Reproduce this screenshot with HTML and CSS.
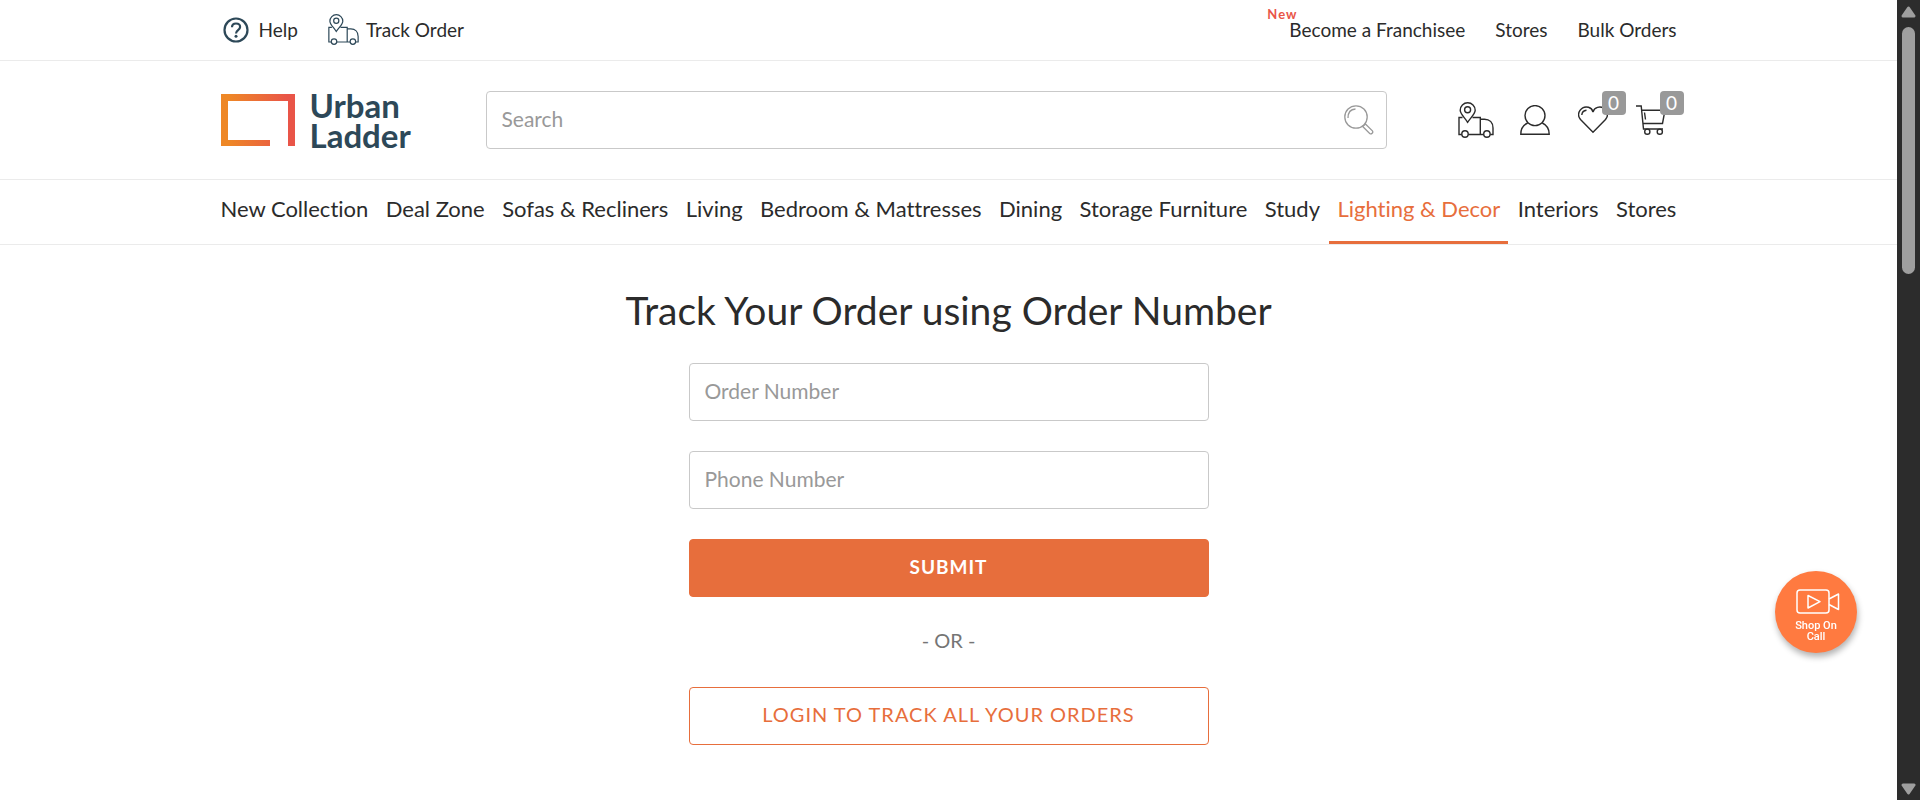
FILE: index.html
```html
<!DOCTYPE html>
<html lang="en">
<head>
<meta charset="utf-8">
<meta name="viewport" content="width=device-width, initial-scale=1">
<title>Track Your Order - Urban Ladder</title>
<link rel="stylesheet" href="styles.css">
</head>
<body>
<svg class="symbols" aria-hidden="true">
  <symbol id="truck" viewBox="0 0 36 36">
    <g fill="none" stroke="currentColor" stroke-width="1.4">
      <path d="M4.5 15.5H1v17h2.8M10.2 32.500H25.600M32.200 32.500H35V26c0-5.500-3.500-8.800-8.500-8.800H22.300M14.500 15.500H22.300V32.500"/>
      <path d="M9.600 20.300C7 16 2.200 12 2.200 8.300a7.500 7.500 0 0 1 15 0C17.200 12 12.400 16 9.600 20.300z"/>
      <circle cx="9.600" cy="7.800" r="3"/>
      <circle cx="7" cy="32" r="3.200"/>
      <circle cx="28.900" cy="32" r="3.200"/>
    </g>
  </symbol>
</svg>
<div class="frame">
  <div class="page">
    <div class="topbar">
      <div class="container topbar-row">
        <nav class="top-links" aria-label="Support">
          <a class="top-link" href="#help">
            <svg class="icon-help" viewBox="0 0 26 26" aria-hidden="true">
              <circle cx="13" cy="13" r="11.500" fill="none" stroke="currentColor" stroke-width="2.200"/>
              <path d="M9 10.200C9 7.800 10.600 6.500 13 6.500s4.100 1.400 4.100 3.500c0 3-4.100 3.200-4.100 6.400" fill="none" stroke="currentColor" stroke-width="2.200"/>
              <circle cx="13" cy="19.300" r="1.500" fill="currentColor"/>
            </svg>Help</a>
          <a class="top-link" href="#track"><svg class="icon-track" aria-hidden="true"><use href="#truck"/></svg>Track Order</a>
        </nav>
        <nav class="top-links" aria-label="Company">
          <a class="top-link franchise" href="#franchise"><span class="new-tag">New</span>Become a Franchisee</a>
          <a class="top-link" href="#stores">Stores</a>
          <a class="top-link" href="#bulk">Bulk Orders</a>
        </nav>
      </div>
    </div>

    <header class="header">
      <div class="container header-row">
        <a class="logo" href="#home">
          <svg class="logo-mark" viewBox="0 0 74 52" aria-hidden="true">
            <defs><linearGradient id="brand" x1="0" y1="0" x2="1" y2="0"><stop offset="0.100" stop-color="#ee8726"/><stop offset="0.900" stop-color="#e95548"/></linearGradient></defs>
            <path d="M0 0H74V52H67V7H7V46H49V52H0z" fill="url(#brand)"/>
          </svg>
          <span class="logo-name">Urban<br>Ladder</span>
        </a>
        <form class="search" role="search">
          <input class="field search-field" type="search" placeholder="Search" aria-label="Search">
          <button class="search-button" type="button" aria-label="Search">
            <svg viewBox="0 0 30 30" aria-hidden="true">
              <g fill="none" stroke="currentColor" stroke-width="1.300">
                <circle cx="12" cy="12" r="11.200"/>
                <path d="M4 13c0-5.500 3-8.800 7.500-9M18.700 21.500l7 7c1.700 1.200 3.900-1 2.700-2.700l-7-6.800z"/>
              </g>
            </svg>
          </button>
        </form>
        <nav class="actions" aria-label="Account">
          <a class="action" href="#track" aria-label="Track order"><svg class="icon-truck" aria-hidden="true"><use href="#truck"/></svg></a>
          <a class="action" href="#account" aria-label="Account">
            <svg class="icon" viewBox="0 0 30 30" aria-hidden="true"><g fill="none" stroke="currentColor" stroke-width="1.400"><circle cx="15" cy="10.600" r="10"/><path d="M7.700 18C3.500 20 .8 24 .8 29.200H29.200C29.200 24 26.500 20 22.300 18"/></g></svg>
          </a>
          <a class="action" href="#wishlist" aria-label="Wishlist, 0 items">
            <svg class="icon" viewBox="0 0 30 30" aria-hidden="true"><g fill="none" stroke="currentColor" stroke-width="1.400"><path d="M15 27.200L2.500 14.500C-2.500 8.500 3.500.5 10.500 2.300 13 3 14.500 5 15 7 15.500 5 17 3 19.500 2.300 26.500.5 32.500 8.500 27.500 14.500z"/><path d="M3.800 10c.2-3 1.700-4.500 4.700-4.800"/></g></svg>
            <span class="badge">0</span>
          </a>
          <a class="action" href="#cart" aria-label="Cart, 0 items">
            <svg class="icon" viewBox="0 0 30 30" aria-hidden="true"><g fill="none" stroke="currentColor" stroke-width="1.400"><path d="M0 1H5.200L7.500 24H27M5.800 5.200H29L26.500 18.500H7M8.500 7.500L9.500 14.500"/><circle cx="11.300" cy="26.700" r="2.600"/><circle cx="23.800" cy="26.700" r="2.600"/></g></svg>
            <span class="badge">0</span>
          </a>
        </nav>
      </div>
    </header>

    <nav class="categories" aria-label="Categories">
      <div class="container">
        <ul class="category-list">
          <li><a class="category" href="#new">New Collection</a></li>
          <li><a class="category" href="#deals">Deal Zone</a></li>
          <li><a class="category" href="#sofas">Sofas &amp; Recliners</a></li>
          <li><a class="category" href="#living">Living</a></li>
          <li><a class="category" href="#bedroom">Bedroom &amp; Mattresses</a></li>
          <li><a class="category" href="#dining">Dining</a></li>
          <li><a class="category" href="#storage">Storage Furniture</a></li>
          <li><a class="category" href="#study">Study</a></li>
          <li><a class="category active" href="#lighting">Lighting &amp; Decor</a></li>
          <li><a class="category" href="#interiors">Interiors</a></li>
          <li><a class="category" href="#stores">Stores</a></li>
        </ul>
      </div>
    </nav>

    <main class="main">
      <h1 class="title">Track Your Order using Order Number</h1>
      <form class="track-form">
        <input class="field" type="text" placeholder="Order Number" aria-label="Order Number">
        <input class="field" type="tel" placeholder="Phone Number" aria-label="Phone Number">
        <button class="button primary" type="button">SUBMIT</button>
        <p class="or">- OR -</p>
        <button class="button outline" type="button">LOGIN TO TRACK ALL YOUR ORDERS</button>
      </form>
    </main>
    <button class="call" type="button">
      <svg class="call-icon" viewBox="0 0 44 25" aria-hidden="true"><g fill="none" stroke="currentColor" stroke-width="1.500" stroke-linejoin="round"><rect x="1" y="1" width="32" height="23" rx="3"/><path d="M12 6.500V19L24 12.700zM33 10l9.500-5V20.500L33 15.500"/></g></svg>
      Shop On<br>Call
    </button>
  </div>
  <div class="scrollbar" aria-hidden="true">
    <svg class="arrow" viewBox="0 0 15 12"><path d="M7.500 2L13 10H2z" fill="currentColor" stroke="currentColor" stroke-width="3" stroke-linejoin="round"/></svg>
    <div class="track"><div class="thumb"></div></div>
    <svg class="arrow" viewBox="0 0 15 12"><path d="M7.500 10L13 2H2z" fill="currentColor" stroke="currentColor" stroke-width="3" stroke-linejoin="round"/></svg>
  </div>
</div>
</body>
</html>
```

FILE: styles.css
```css
* { box-sizing: border-box; }

body {
  margin: 0;
  background: #fff;
  color: #2b2b2b;
  font-family: Lato, "Open Sans", sans-serif;
  font-size: 20px;
  font-variant-ligatures: none;
}

a { color: inherit; text-decoration: none; }
button, input { font: inherit; }
svg { display: block; }
.symbols { display: none; }

.frame { display: flex; height: 100vh; overflow: hidden; }
.page { flex: 1; min-width: 0; }
.container { max-width: 1456px; margin: 0 auto; }

.topbar { border-bottom: 1px solid #ebebeb; }
.topbar-row { display: flex; justify-content: space-between; height: 60px; }
.top-links { display: flex; gap: 30px; }
.top-link {
  display: flex;
  align-items: center;
  padding-bottom: 2px;
  font-size: 19px;
  white-space: nowrap;
}
.icon-help { width: 26px; height: 26px; margin: 2px 10px 0 2px; color: #2d4858; }
.icon-track { width: 31px; height: 31px; margin-right: 7px; color: #2d4858; }
.franchise { position: relative; }
.new-tag {
  position: absolute;
  top: 7px;
  left: -22px;
  color: #e95548;
  font-size: 13px;
  font-weight: 700;
  line-height: 15px;
  letter-spacing: 1px;
}

.header { border-bottom: 1px solid #ebebeb; }
.header-row { display: flex; align-items: center; padding: 29px 11px 29px 0; }
.logo { display: flex; align-items: center; gap: 15px; width: 195px; margin-right: 70px; }
.logo-mark { width: 74px; height: 52px; }
.logo-name { color: #2d4858; font-size: 33px; font-weight: 700; line-height: 30px; }

.field {
  display: block;
  width: 100%;
  height: 58px;
  padding: 0 15px 3px;
  border: 1px solid #c9c9c9;
  border-radius: 4px;
  background: #fff;
  outline: 0;
  appearance: none;
  font-size: 21px;
}
.field::placeholder { color: #999; opacity: 1; }
.search { position: relative; flex: 1; }
.search-field { padding-right: 60px; }
.search-button {
  position: absolute;
  top: 14px;
  right: 13px;
  width: 30px;
  height: 30px;
  padding: 0;
  border: 0;
  background: none;
  color: #999;
}
.actions { display: flex; gap: 28px; margin-left: 71px; }
.action { position: relative; display: flex; align-items: center; height: 36px; }
.action:first-child { margin-right: -2px; }
.icon { width: 30px; height: 30px; }
.icon-truck { width: 36px; height: 36px; }
.badge {
  position: absolute;
  top: -11px;
  left: 24px;
  width: 24px;
  height: 24px;
  border-radius: 4px;
  background: #999;
  color: #fff;
  font-size: 19px;
  line-height: 24px;
  text-align: center;
}

.categories { border-bottom: 1px solid #ebebeb; }
.category-list {
  display: flex;
  justify-content: space-between;
  margin: 0 -8px;
  padding: 0;
  list-style: none;
}
.category {
  display: block;
  padding: 0 8px 3px;
  border-bottom: 3px solid transparent;
  font-size: 22px;
  line-height: 58px;
  white-space: nowrap;
}
.category.active { border-color: #e76e3c; color: #e76e3c; }

.main { padding: 41px 20px 54px; }
.title {
  margin: 0 0 29px;
  font-size: 39px;
  font-weight: 400;
  line-height: 48px;
  text-align: center;
}
.track-form { display: grid; gap: 30px; max-width: 520px; margin: 0 auto; }
.button {
  width: 100%;
  height: 58px;
  padding: 0 0 4px;
  border: 1px solid #e76e3c;
  border-radius: 4px;
  letter-spacing: 1px;
}
.primary { background: #e76e3c; color: #fff; font-size: 19px; font-weight: 700; }
.outline { background: #fff; color: #e76e3c; }
.or { margin: 0; padding-bottom: 4px; color: #757575; line-height: 26px; text-align: center; }

.call {
  position: fixed;
  right: 63px;
  bottom: 147px;
  display: flex;
  flex-direction: column;
  align-items: center;
  width: 82px;
  height: 82px;
  padding: 18px 0 0;
  border: 0;
  border-radius: 50%;
  background: #ff7a40;
  box-shadow: 1px 4px 6px rgba(0, 0, 0, 0.3);
  color: #fff;
  font-family: Roboto, sans-serif;
  font-size: 11px;
  font-weight: 500;
  line-height: 11px;
}
.call-icon { width: 44px; height: 25px; margin: 0 0 6px 4px; }

.scrollbar {
  display: flex;
  flex-direction: column;
  align-items: center;
  width: 23px;
  padding: 6px 0 5px;
  background: #2c2c2c;
  color: #9f9f9f;
}
.arrow { width: 15px; height: 12px; }
.track { flex: 1; padding: 9px 0; }
.thumb { width: 13px; height: 33%; border-radius: 7px; background: currentColor; }
```
